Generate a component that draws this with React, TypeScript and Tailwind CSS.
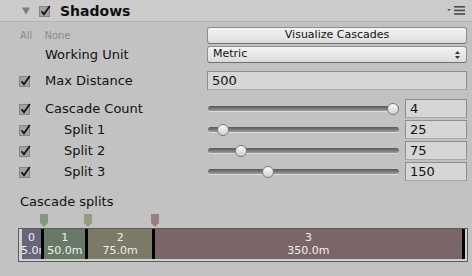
import React from "react";

const sliders = [
  { label: "Cascade Count", value: "4", pct: 100, indent: false },
  { label: "Split 1", value: "25", pct: 5, indent: true },
  { label: "Split 2", value: "75", pct: 15, indent: true },
  { label: "Split 3", value: "150", pct: 30, indent: true },
];

// segment widths are percentages of the bar
const cascades = [
  { name: "0", dist: "25.0m", pct: 5, bg: "bg-[#66667a]" },
  { name: "1", dist: "50.0m", pct: 10, bg: "bg-[#667a66]" },
  { name: "2", dist: "75.0m", pct: 15, bg: "bg-[#7a7a66]" },
  { name: "3", dist: "350.0m", pct: 70, bg: "bg-[#7a6666]" },
];

const markers = [
  { pos: 5, color: "#809980" },
  { pos: 15, color: "#999980" },
  { pos: 30, color: "#998080" },
];

function Check() {
  return (
    <svg width="13" height="13" viewBox="0 0 13 13" className="block">
      <rect x="0.5" y="2.5" width="10" height="10" fill="#a3a3a3" stroke="#868686" />
      <path d="M2.5 7.2 L5 10.3 L10.8 2" fill="none" stroke="#111" strokeWidth="1.7" />
    </svg>
  );
}

function NumberField({ value, className = "" }: { value: string; className?: string }) {
  return (
    <div
      className={
        "h-full flex items-center border border-[#8e8e8e] border-b-[#a8a8a8] bg-[#d6d6d6] px-[4px] text-[13px] text-[#111] " +
        className
      }
    >
      {value}
    </div>
  );
}

function Slider({ pct }: { pct: number }) {
  return (
    <div className="relative w-[191px] h-full ml-[1px] flex items-center">
      <div className="w-full h-[5px] rounded-full bg-gradient-to-b from-[#575757] to-[#9d9d9d] shadow-[0_1px_0_#dcdcdc]" />
      <div
        className="absolute top-1/2 -translate-y-1/2 w-[12px] h-[12px] rounded-full border border-[#7a7a7a] bg-gradient-to-b from-[#fbfbfb] to-[#cfcfcf]"
        style={{ left: `calc((100% - 12px) * ${pct / 100})` }}
      />
    </div>
  );
}

export default function App() {
  return (
    <div className="w-[472px] h-[276px] overflow-hidden bg-[#c2c2c2] font-['DejaVu_Sans',sans-serif] text-[#111]">
      {/* header */}
      <div className="h-[22px] flex items-center bg-[#cbcbcb] border-b border-[#b3b3b3]">
        <svg width="9" height="8" viewBox="0 0 9 8" className="ml-[22px]">
          <path d="M0 0.5 H8 L4 7.5 Z" fill="#7c7c7c" />
        </svg>
        <div className="ml-[8px]">
          <Check />
        </div>
        <span className="ml-[8px] text-[14px] font-bold leading-none">Shadows</span>
        <svg width="20" height="10" viewBox="0 0 20 10" className="ml-auto mr-[5px]">
          <path d="M0 3 H4 L2 5 Z" fill="#555" />
          <rect x="7" y="0" width="11" height="1.6" fill="#4a4a4a" />
          <rect x="7" y="3.6" width="11" height="1.6" fill="#4a4a4a" />
          <rect x="7" y="7.2" width="11" height="1.6" fill="#4a4a4a" />
        </svg>
      </div>

      {/* All / None + visualize */}
      <div className="mt-[5px] h-[17px] flex items-center">
        <div className="w-[207px] shrink-0 flex items-center pl-[20px] text-[10px] text-[#8a8a8a]">
          <span>All</span>
          <span className="ml-[12px]">None</span>
        </div>
        <div className="w-[260px] h-full flex items-center justify-center rounded-[3px] border border-[#8f8f8f] border-b-[#6f6f6f] bg-gradient-to-b from-[#f4f4f4] to-[#dcdcdc] text-[11px] text-[#111]">
          Visualize Cascades
        </div>
      </div>

      {/* working unit */}
      <div className="mt-[2px] h-[17px] flex items-center">
        <div className="w-[207px] shrink-0 flex items-center pl-[45px] text-[13px]">Working Unit</div>
        <div className="w-[260px] h-full flex items-center rounded-[3px] border border-[#8f8f8f] border-b-[#6f6f6f] bg-gradient-to-b from-[#f4f4f4] to-[#dcdcdc] pl-[5px] pr-[6px] text-[11px]">
          <span>Metric</span>
          <svg width="5" height="8" viewBox="0 0 5 8" className="ml-auto">
            <path d="M0 3 L2.5 0 L5 3 Z M0 5 L2.5 8 L5 5 Z" fill="#333" />
          </svg>
        </div>
      </div>

      {/* max distance */}
      <div className="mt-[8px] h-[19px] flex items-center">
        <div className="w-[207px] shrink-0 flex items-center pl-[19px] text-[13px]">
          <div className="w-[26px]">
            <Check />
          </div>
          <span>Max Distance</span>
        </div>
        <NumberField value="500" className="w-[260px]" />
      </div>

      {/* cascade sliders */}
      <div className="mt-[9px] flex flex-col gap-[2px]">
        {sliders.map((s) => (
          <div key={s.label} className="h-[19px] flex items-center">
            <div className="w-[207px] shrink-0 flex items-center pl-[19px] text-[13px]">
              <div className="w-[26px]">
                <Check />
              </div>
              <span className={s.indent ? "pl-[19px]" : ""}>{s.label}</span>
            </div>
            <Slider pct={s.pct} />
            <NumberField value={s.value} className="ml-auto mr-[5px] w-[62px]" />
          </div>
        ))}
      </div>

      {/* cascade splits */}
      <div className="mt-[13px] pl-[20px] text-[13px] leading-[16px]">Cascade splits</div>

      <div className="ml-[18px] w-[450px]">
        <div className="relative h-[14px] mt-[4px] ml-[4px] mr-[3px]">
          {markers.map((m) => (
            <svg
              key={m.pos}
              width="8"
              height="13"
              viewBox="0 0 8 13"
              className="absolute top-0"
              style={{ left: `calc(${m.pos}% - 4px)` }}
            >
              <path d="M0 0 H8 V9 L4 13 L0 9 Z" fill={m.color} />
            </svg>
          ))}
        </div>
        <div className="h-[34px] border border-[#5b5b5b] bg-[#d0d0d0] pl-[3px] pr-[2px] pb-[2px] flex">
          {cascades.map((c) => (
            <div
              key={c.name}
              className={"h-full flex border-r-[3px] border-black overflow-hidden " + c.bg}
              style={{ width: `${c.pct}%` }}
            >
              <div className="flex-1 min-w-0 flex flex-col items-center justify-center text-[11px] leading-[13px] text-[#f0f0f0] whitespace-nowrap">
                <span>{c.name}</span>
                <span>{c.dist}</span>
              </div>
            </div>
          ))}
        </div>
      </div>
    </div>
  );
}
